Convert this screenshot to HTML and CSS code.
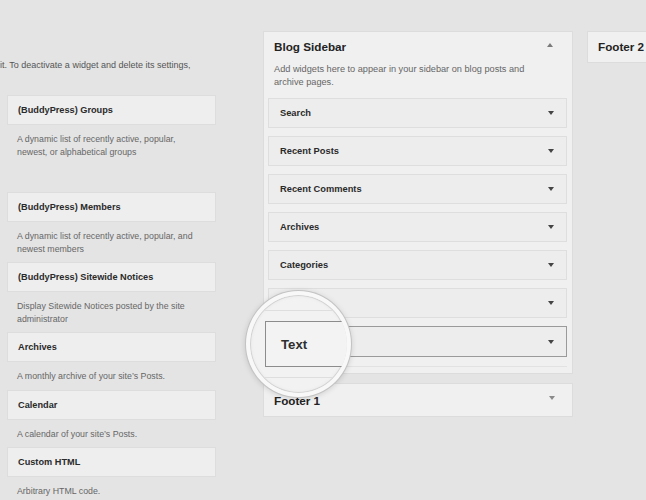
FILE: index.html
```html
<!DOCTYPE html>
<html>
<head>
<meta charset="utf-8">
<link rel="stylesheet" href="styles.css">
</head>
<body>
<div class="page">
  <div class="available">
    <p class="intro">it. To deactivate a widget and delete its settings,</p>
    <div class="widget w-groups">
      <div class="card">(BuddyPress) Groups</div>
      <p class="desc">A dynamic list of recently active, popular,<br>newest, or alphabetical groups</p>
    </div>
    <div class="widget">
      <div class="card">(BuddyPress) Members</div>
      <p class="desc">A dynamic list of recently active, popular, and<br>newest members</p>
    </div>
    <div class="widget">
      <div class="card">(BuddyPress) Sitewide Notices</div>
      <p class="desc">Display Sitewide Notices posted by the site<br>administrator</p>
    </div>
    <div class="widget">
      <div class="card">Archives</div>
      <p class="desc">A monthly archive of your site’s Posts.</p>
    </div>
    <div class="widget">
      <div class="card">Calendar</div>
      <p class="desc">A calendar of your site’s Posts.</p>
    </div>
    <div class="widget">
      <div class="card">Custom HTML</div>
      <p class="desc">Arbitrary HTML code.</p>
    </div>
  </div>

  <div class="areas">
    <div class="panel">
      <div class="panel-head">
        <h2 class="panel-title">Blog Sidebar</h2>
        <span class="arrow-up"></span>
      </div>
      <p class="panel-desc">Add widgets here to appear in your sidebar on blog posts and<br>archive pages.</p>
      <div class="slots">
        <div class="slot"><span>Search</span><i class="arrow-down"></i></div>
        <div class="slot"><span>Recent Posts</span><i class="arrow-down"></i></div>
        <div class="slot"><span>Recent Comments</span><i class="arrow-down"></i></div>
        <div class="slot"><span>Archives</span><i class="arrow-down"></i></div>
        <div class="slot"><span>Categories</span><i class="arrow-down"></i></div>
        <div class="slot"><span></span><i class="arrow-down"></i></div>
        <div class="slot slot-drag"><span></span><i class="arrow-down"></i></div>
        <div class="placeholder"></div>
      </div>
    </div>
    <div class="panel panel-closed">
      <h2 class="panel-title">Footer 1</h2>
      <span class="arrow-down light"></span>
    </div>
  </div>

  <div class="areas-right">
    <div class="panel panel-closed panel-f2">
      <h2 class="panel-title">Footer 2</h2>
    </div>
  </div>

  <div class="magnifier">
    <div class="mag-line mag-line-top"></div>
    <div class="mag-box"><span>Text</span></div>
    <div class="mag-line mag-line-bottom"></div>
  </div>
</div>
</body>
</html>
```

FILE: styles.css
```css
* { box-sizing: border-box; }
html, body {
  margin: 0;
  padding: 0;
  background: #e4e4e4;
}
body {
  font-family: "Liberation Sans", Arial, sans-serif;
  color: #2c2c2c;
  width: 646px;
  height: 500px;
  overflow: hidden;
}
.page {
  position: relative;
  display: flex;
  align-items: flex-start;
  height: 500px;
}

/* left column */
.available {
  width: 216px;
  flex: none;
  padding-top: 59px;
}
.intro {
  margin: 0 0 23px;
  font-size: 9px;
  line-height: 13px;
  color: #555;
  white-space: nowrap;
}
.widget {
  margin-left: 7px;
  width: 209px;
}
.w-groups { margin-bottom: 27px; }
.card {
  height: 30px;
  line-height: 29px;
  padding-left: 10px;
  background: #eeeeee;
  border: 1px solid #dddddd;
  font-size: 9.2px;
  font-weight: bold;
  color: #2a2a2a;
}
.desc {
  margin: 0;
  padding: 8px 0 7px 10px;
  font-size: 8.8px;
  line-height: 12.5px;
  color: #666;
}

/* middle column */
.areas {
  margin-left: 47px;
  width: 310px;
  flex: none;
  padding-top: 31px;
}
.panel {
  background: #f0f0f0;
  border: 1px solid #dcdcdc;
  padding: 0 5px 6px 4px;
  position: relative;
}
.panel-head {
  display: flex;
  justify-content: space-between;
  align-items: center;
  padding: 7px 14px 0 6px;
}
.panel-title {
  margin: 0;
  font-size: 11.7px;
  line-height: 16px;
  font-weight: bold;
  color: #232323;
}
.arrow-up {
  width: 0;
  height: 0;
  border-left: 3px solid transparent;
  border-right: 3px solid transparent;
  border-bottom: 4px solid #7a7a7a;
  margin-top: -4px;
}
.panel-desc {
  margin: 8px 0 0 6px;
  font-size: 9.2px;
  line-height: 13px;
  color: #666;
}
.slots {
  margin-top: 9px;
  display: flex;
  flex-direction: column;
  gap: 8px;
}
.slot {
  height: 30px;
  background: #ededed;
  border: 1px solid #dedede;
  display: flex;
  align-items: center;
  justify-content: space-between;
  padding: 0 12px 0 11px;
  font-size: 9.3px;
  font-weight: bold;
  color: #2a2a2a;
}
.slot-drag {
  border-color: #9a9a9a;
  height: 31px;
}
.arrow-down {
  display: block;
  width: 0;
  height: 0;
  border-left: 3px solid transparent;
  border-right: 3px solid transparent;
  border-top: 4px solid #444;
}
.arrow-down.light { border-top-color: #8a8a8a; }
.placeholder {
  height: 10px;
  margin-top: -8px;
  border-bottom: 1px solid #e2e2e2;
}
.panel-closed {
  margin-top: 9px;
  height: 34px;
  display: flex;
  align-items: center;
  justify-content: space-between;
  padding: 2px 17px 0 10px;
}
.panel-closed .arrow-down { margin-top: -6px; }

/* right column */
.areas-right {
  margin-left: 14px;
  padding-top: 31px;
  flex: none;
  width: 80px;
}
.panel-f2 {
  margin-top: 0;
  height: 32px;
  padding: 0 0 0 10px;
  border-right: none;
}

/* magnifier overlay */
.magnifier {
  position: absolute;
  left: 246px;
  top: 291px;
  width: 105px;
  height: 106px;
  border-radius: 50%;
  overflow: hidden;
  background: #f2f2f2;
  border: 4px solid #f8f8f8;
  box-shadow: 0 0 0 1px #c3c3c3, 0 1px 6px rgba(0,0,0,0.18), inset 0 0 0 1px #d3d3d3, inset 0 0 4px rgba(0,0,0,0.08);
}
.mag-box {
  position: absolute;
  left: 15px;
  top: 26px;
  width: 120px;
  height: 46px;
  border: 1px solid #8c8c8c;
  background: #f3f3f3;
  padding-left: 15px;
  display: flex;
  align-items: center;
  font-size: 13.2px;
  font-weight: bold;
  color: #2f2f2f;
}
.mag-line {
  position: absolute;
  left: 0;
  right: 0;
  height: 1px;
  background: #dedede;
}
.mag-line-top { top: 15px; }
.mag-line-bottom { top: 82px; }
```
